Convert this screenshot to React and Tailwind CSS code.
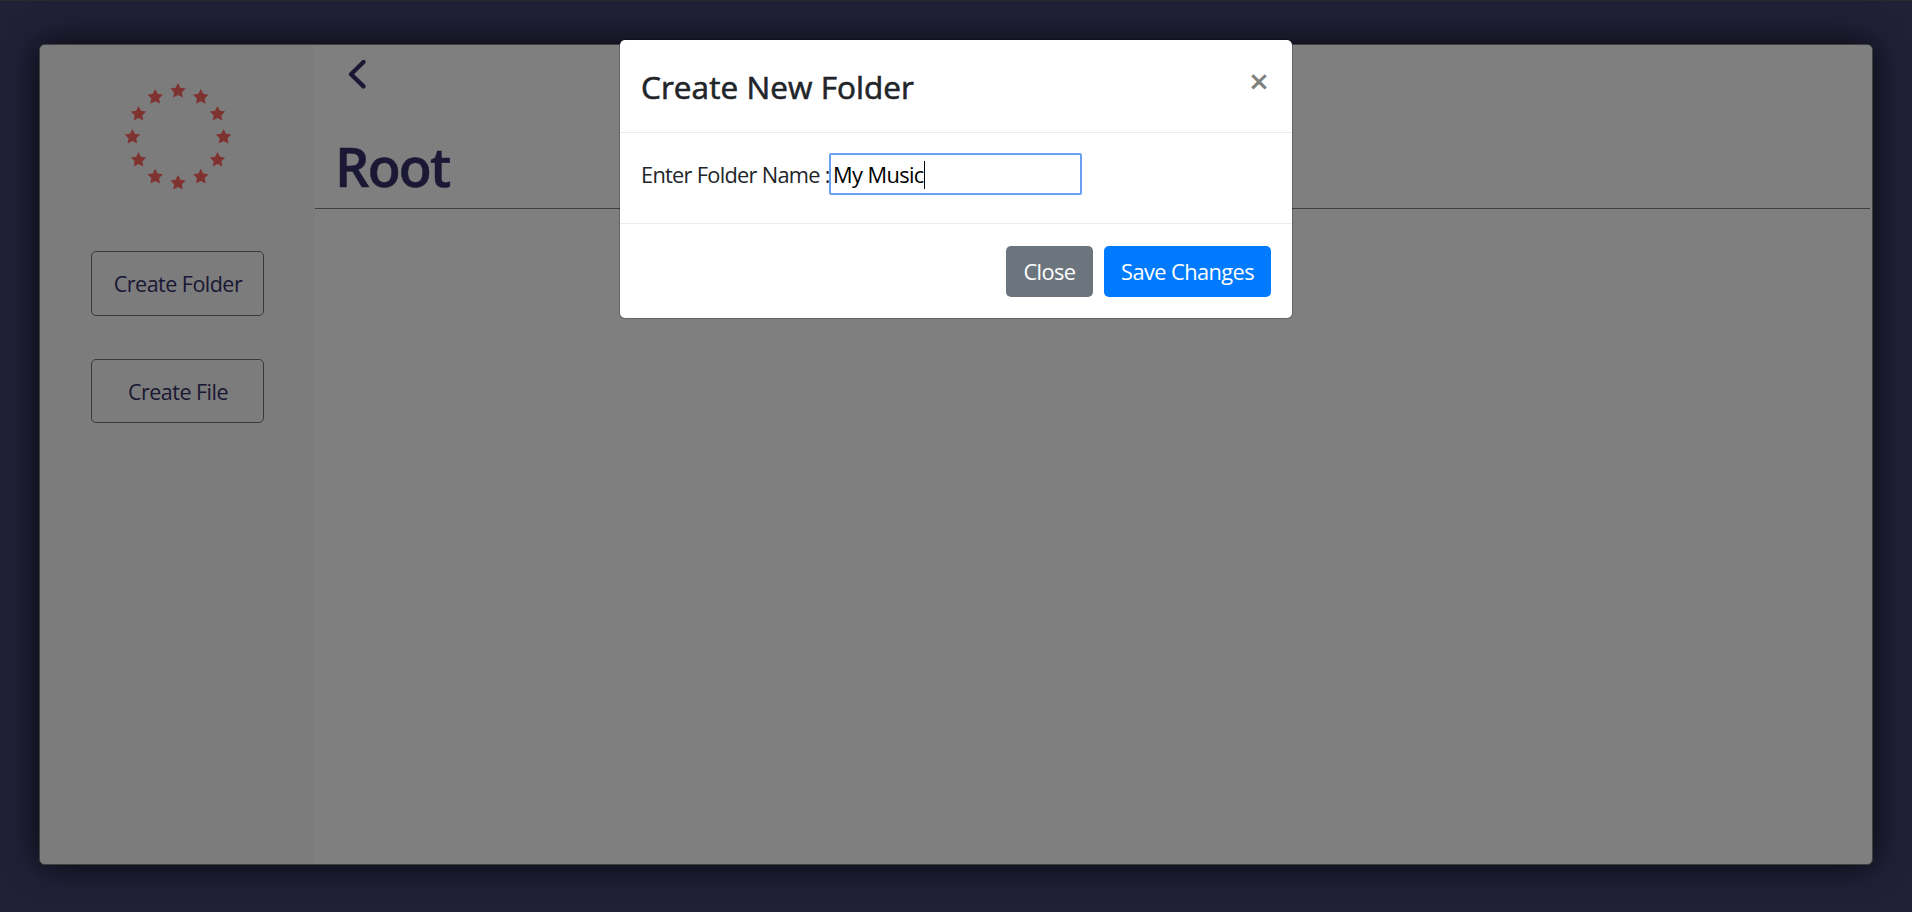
const STAR_COUNT = 12;
const RING_RADIUS = 45.6;

function starPoints(cx, cy, outer, inner) {
  return Array.from({ length: 10 }, (_, i) => {
    const r = i % 2 === 0 ? outer : inner;
    const a = (Math.PI / 5) * i - Math.PI / 2;
    return `${(cx + r * Math.cos(a)).toFixed(2)},${(cy + r * Math.sin(a)).toFixed(2)}`;
  }).join(" ");
}

function StarRing() {
  return (
    <svg className="mt-[32px] h-[120px] w-[120px]" viewBox="0 0 120 120" fill="#ff6661">
      {Array.from({ length: STAR_COUNT }, (_, i) => {
        const a = (Math.PI * 2 * i) / STAR_COUNT;
        return (
          <polygon
            key={i}
            points={starPoints(60 + RING_RADIUS * Math.cos(a), 60 + (RING_RADIUS + 0.4) * Math.sin(a), 8.1, 4.1)}
          />
        );
      })}
    </svg>
  );
}

function SideButton({ children, className }) {
  return (
    <button
      className={`flex w-[173px] items-center justify-center rounded-[5px] border border-[#6c757d] text-[21.5px] tracking-[-0.52px] text-[#343068] ${className}`}
    >
      {children}
    </button>
  );
}

function Sidebar() {
  return (
    <aside className="flex w-[275px] shrink-0 flex-col items-center bg-[#f8f8f8]">
      <StarRing />
      <SideButton className="mt-[54px] h-[65px] pt-[2px] pl-px">Create Folder</SideButton>
      <SideButton className="mt-[43px] h-[64px] pt-[2px] pl-px">Create File</SideButton>
    </aside>
  );
}

function Explorer() {
  return (
    <main className="flex grow flex-col bg-white pr-[2px]">
      <header className="flex h-[164px] flex-col border-b border-[#808080]">
        <svg
          className="mt-[13px] ml-[32px] h-[32px] w-[22px] shrink-0"
          viewBox="0 0 22 32"
          fill="none"
          stroke="#343068"
          strokeWidth="4.4"
          strokeLinecap="round"
          strokeLinejoin="round"
        >
          <path d="M16.5 4 L4 16.2 L16.5 28.4" />
        </svg>
        <h1 className="mt-[41px] ml-[20px] text-[54px] leading-[70px] font-semibold tracking-[-1.8px] text-[#343068] [-webkit-text-stroke:0.5px_#343068]">
          Root
        </h1>
      </header>
    </main>
  );
}

function FolderDialog() {
  return (
    <div className="w-[674px] rounded-[6px] border border-black/20 bg-white bg-clip-padding text-[#212529]">
      <div className="flex h-[93px] items-start justify-between border-b border-[#e9ecef] pr-[23px] pl-[21px]">
        <h5 className="mt-[23px] text-[31.5px] leading-[48px] font-medium tracking-[0.06px] whitespace-nowrap [-webkit-text-stroke:0.6px_#212529]">
          Create New Folder
        </h5>
        <button className="mt-[24px] text-[35px] leading-[34px] font-semibold text-[#808080]">×</button>
      </div>
      <div className="flex h-[91px] items-start border-b border-[#e9ecef] pt-[20px] pl-[21px]">
        <label className="w-[188px] shrink-0 text-[21.8px] leading-[44px] tracking-[-0.72px] whitespace-nowrap">
          Enter Folder Name :
        </label>
        <div className="flex h-[42px] w-[253px] items-center rounded-[2px] border-2 border-[#6ba0f0] bg-white pt-[2px] pl-[2px] text-[21.8px] tracking-[-0.6px] text-black">
          <span>My Music</span>
          <span className="h-[28px] w-px bg-black" />
        </div>
      </div>
      <div className="flex h-[94px] justify-end gap-[11px] pt-[22px] pr-[21px] text-[21.8px] tracking-[-0.58px] text-white">
        <button className="flex h-[51px] w-[87px] items-center justify-center rounded-[5px] bg-[#6c757d] pt-[2px]">
          Close
        </button>
        <button className="flex h-[51px] w-[167px] items-center justify-center rounded-[5px] bg-[#007bff] pt-[2px]">
          Save Changes
        </button>
      </div>
    </div>
  );
}

export default function App() {
  return (
    <div className="relative h-[912px] w-[1912px] overflow-hidden bg-[#404070] font-['Open_Sans','Noto_Sans',sans-serif]">
      <div className="px-[39px] pt-[44px]">
        <div className="flex h-[821px] w-[1834px] overflow-hidden rounded-[6px] border border-[#808080] bg-white shadow-[0_0_34px_rgba(0,0,0,0.8)]">
          <Sidebar />
          <Explorer />
        </div>
      </div>
      <div className="absolute inset-0 flex items-start justify-center border-t border-[#2a2a2a] bg-black/50 pt-[38px]">
        <FolderDialog />
      </div>
    </div>
  );
}
